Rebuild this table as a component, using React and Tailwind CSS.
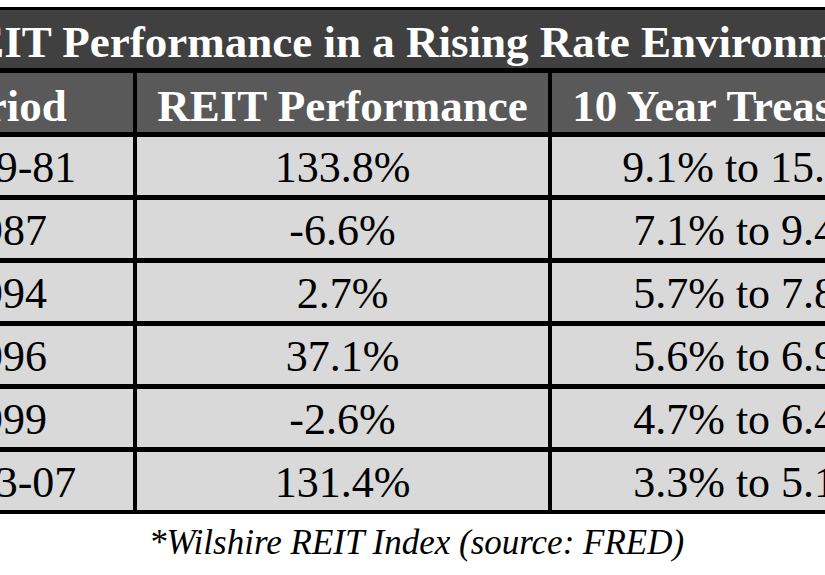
import React from "react";

const rows = [
  ["1979-81", "133.8%", "9.1% to 15.8%"],
  ["1987", "-6.6%", "7.1% to 9.4%"],
  ["1994", "2.7%", "5.7% to 7.8%"],
  ["1996", "37.1%", "5.6% to 6.9%"],
  ["1999", "-2.6%", "4.7% to 6.4%"],
  ["2003-07", "131.4%", "3.3% to 5.1%"],
];

export default function App() {
  return (
    <div className="w-[825px] h-[575px] overflow-hidden bg-white [font-family:'Liberation_Serif','Times_New_Roman',serif]">
      <div className="pt-[7px] ml-[-131px] w-[1089px]">
        <div className="grid grid-cols-[260px_411px_402px] gap-x-[4px] gap-y-[5px] bg-black border-x-[4px] border-t-[3px] border-b-[4px] border-black">
          <div className="col-span-3 h-[58px] bg-[#404040] text-white font-bold text-[45px] leading-none text-center pt-[10px] pl-[10px] whitespace-nowrap">
            REIT Performance in a Rising Rate Environment
          </div>
          <div className="h-[59px] bg-[#595959] text-white font-bold text-[45px] leading-none text-center pt-[11px] whitespace-nowrap">
            Period
          </div>
          <div className="h-[59px] bg-[#595959] text-white font-bold text-[45px] leading-none text-center pt-[11px] whitespace-nowrap">
            REIT Performance
          </div>
          <div className="h-[59px] bg-[#595959] text-white font-bold text-[45px] leading-none text-center pt-[11px] pr-[34px] whitespace-nowrap">
            10 Year Treasury
          </div>
          {rows.map((r, i) => (
            <React.Fragment key={i}>
              {r.map((c, j) => (
                <div
                  key={j}
                  className="h-[58px] bg-[#d9d9d9] text-black text-[44px] leading-none text-center pt-[9px] whitespace-nowrap"
                >
                  {c}
                </div>
              ))}
            </React.Fragment>
          ))}
        </div>
      </div>
      <div className="w-[825px] pl-[8px] mt-[9px] text-center italic text-[35px] leading-[40px] text-black whitespace-nowrap">
        *Wilshire REIT Index (source: FRED)
      </div>
    </div>
  );
}
